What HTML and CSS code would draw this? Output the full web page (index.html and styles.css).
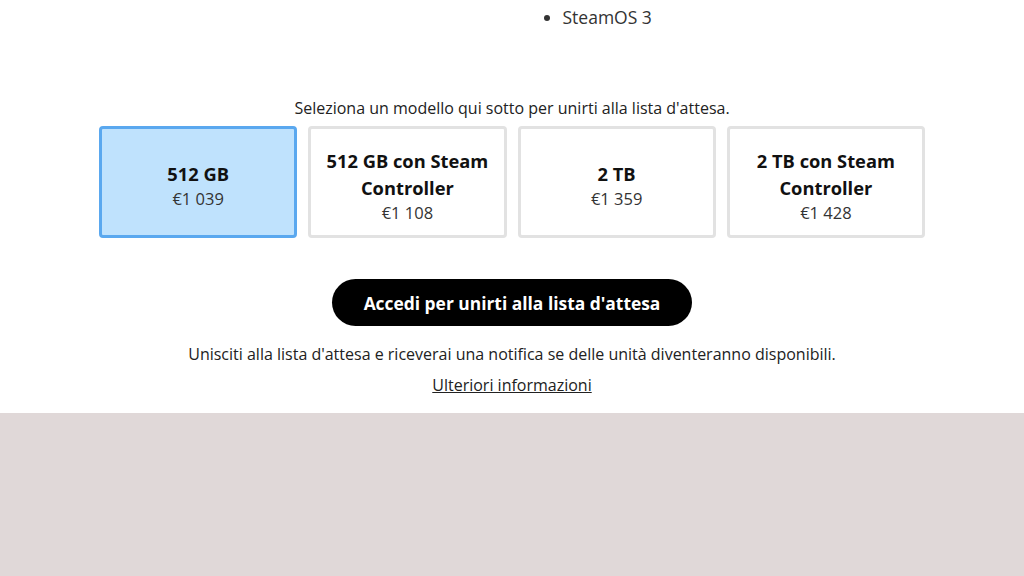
FILE: index.html
```html
<!DOCTYPE html>
<html lang="it">
<head>
  <meta charset="UTF-8" />
  <meta name="viewport" content="width=device-width, initial-scale=1.0" />
  <title>Lista d'attesa</title>
  <link rel="stylesheet" href="styles.css">
</head>
<body>
  <div class="page">
    <ul class="specs">
      <li>SteamOS 3</li>
    </ul>

    <p class="pick-hint">Seleziona un modello qui sotto per unirti alla lista d'attesa.</p>

    <div class="models">
      <div class="model selected">
        <div class="model-name">512 GB</div>
        <div class="model-price">€1 039</div>
      </div>
      <div class="model">
        <div class="model-name">512 GB con Steam Controller</div>
        <div class="model-price">€1 108</div>
      </div>
      <div class="model">
        <div class="model-name">2 TB</div>
        <div class="model-price">€1 359</div>
      </div>
      <div class="model">
        <div class="model-name">2 TB con Steam Controller</div>
        <div class="model-price">€1 428</div>
      </div>
    </div>

    <button class="join-button">Accedi per unirti alla lista d'attesa</button>
    <p class="join-note">Unisciti alla lista d'attesa e riceverai una notifica se delle unità diventeranno disponibili.</p>
    <a class="more-link" href="#">Ulteriori informazioni</a>
  </div>
  <div class="footer-band"></div>
</body>
</html>
```

FILE: styles.css
```css
body {
  margin: 0;
  font-family: "Open Sans", "Noto Sans", Arial, sans-serif;
  color: #1a1a1a;
  background-color: #e0d8d8;
}

.page {
  background-color: #fff;
  height: 413px;
  display: flex;
  flex-direction: column;
  align-items: center;
}

.specs {
  margin: 4px 0 0 186px;
  padding: 0 0 0 25px;
  width: 110px;
  font-size: 17.5px;
  line-height: 26px;
  color: #333;
}

.pick-hint {
  margin: 67px 0 0;
  font-size: 16px;
  line-height: 22px;
  color: #222;
}

.models {
  display: flex;
  gap: 11px;
  margin-top: 7px;
  width: 826px;
}

.model {
  flex: 1;
  height: 112px;
  box-sizing: border-box;
  border: 3px solid #e2e2e2;
  border-radius: 4px;
  background-color: #fff;
  display: flex;
  flex-direction: column;
  justify-content: center;
  align-items: center;
  text-align: center;
  padding: 6px 8px 0;
}

.model.selected {
  background-color: #bfe2fd;
  border-color: #5aa8ef;
}

.model-name {
  font-weight: 700;
  font-size: 18.3px;
  line-height: 27px;
  color: #111;
}

.model-price {
  font-size: 16.5px;
  line-height: 23px;
  color: #333;
}

.join-button {
  margin-top: 41px;
  width: 360px;
  height: 47px;
  border: none;
  border-radius: 24px;
  background-color: #000;
  color: #fff;
  font-family: inherit;
  font-weight: 700;
  font-size: 17.4px;
  cursor: pointer;
}

.join-note {
  margin: 17px 0 0;
  font-size: 16px;
  line-height: 22px;
  color: #222;
}

.more-link {
  margin-top: 9px;
  font-size: 16px;
  line-height: 22px;
  color: #222;
  text-decoration: underline;
}
```
